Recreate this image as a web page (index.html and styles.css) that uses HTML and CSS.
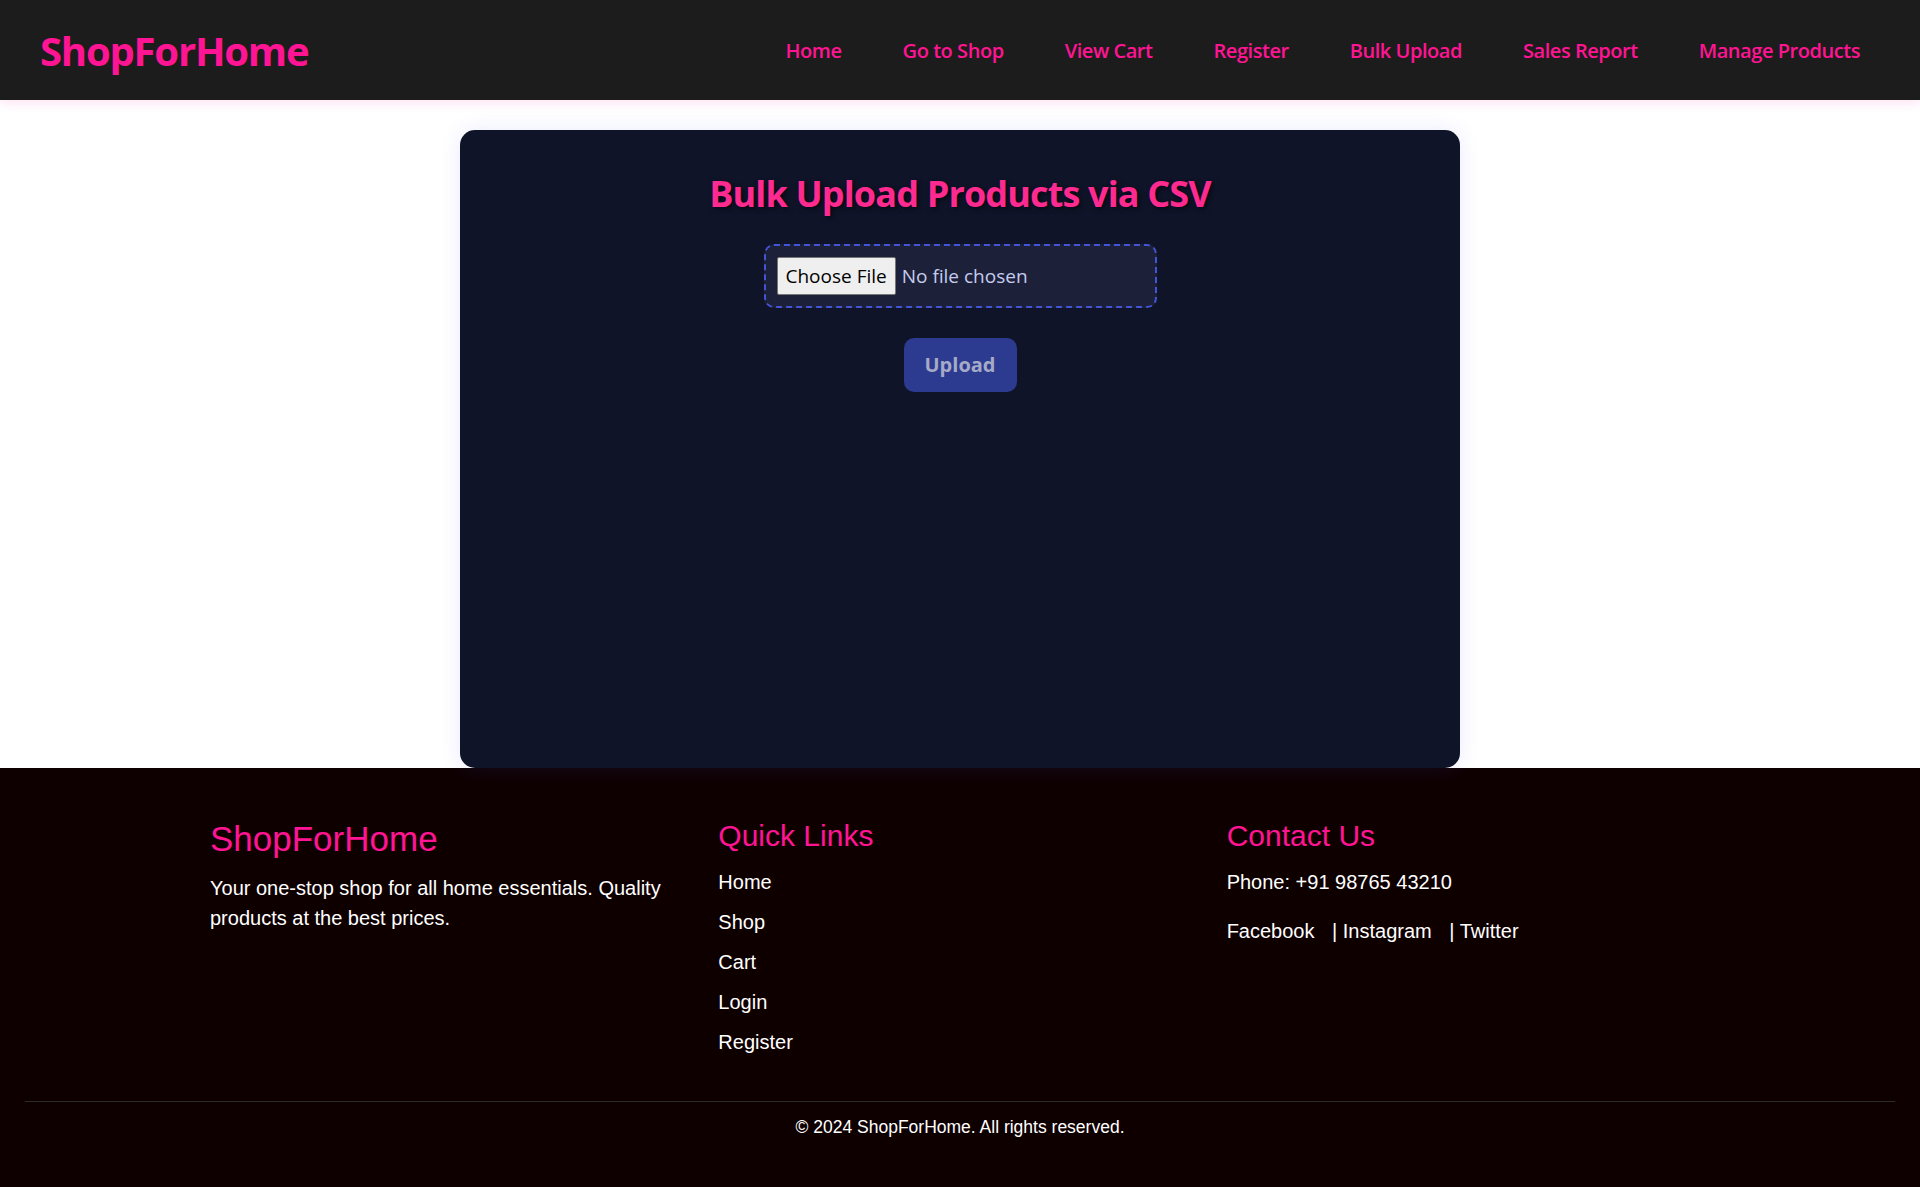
FILE: index.html
```html
<!DOCTYPE html>
<html lang="en">
<head>
<meta charset="utf-8">
<title>ShopForHome - Bulk Upload</title>
<link rel="stylesheet" href="styles.css">
</head>
<body>
<header class="navbar">
  <div class="logo">ShopForHome</div>
  <nav class="nav-links">
    <a class="nav-link" href="#">Home</a>
    <a class="nav-link" href="#">Go to Shop</a>
    <a class="nav-link" href="#">View Cart</a>
    <a class="nav-link" href="#">Register</a>
    <a class="nav-link" href="#">Bulk Upload</a>
    <a class="nav-link" href="#">Sales Report</a>
    <a class="nav-link" href="#">Manage Products</a>
  </nav>
</header>

<main class="page">
  <section class="upload-card">
    <h2 class="upload-title">Bulk Upload Products via CSV</h2>
    <form class="upload-form">
      <input class="file-input" type="file" accept=".csv">
      <button class="upload-btn" type="button" disabled>Upload</button>
    </form>
  </section>
</main>

<footer class="site-footer">
  <div class="footer-grid">
    <div class="footer-col">
      <h2 class="footer-brand">ShopForHome</h2>
      <p class="footer-text">Your one-stop shop for all home essentials. Quality products at the best prices.</p>
    </div>
    <div class="footer-col">
      <h3 class="footer-heading">Quick Links</h3>
      <ul class="footer-links">
        <li><a href="#">Home</a></li>
        <li><a href="#">Shop</a></li>
        <li><a href="#">Cart</a></li>
        <li><a href="#">Login</a></li>
        <li><a href="#">Register</a></li>
      </ul>
    </div>
    <div class="footer-col">
      <h3 class="footer-heading">Contact Us</h3>
      <p class="contact-line">Phone: +91 98765 43210</p>
      <p class="contact-line social"><a href="#">Facebook</a> | <a href="#">Instagram</a> | <a href="#">Twitter</a></p>
    </div>
  </div>
  <div class="footer-bottom">
    <p class="copyright">&copy; 2024 ShopForHome. All rights reserved.</p>
  </div>
</footer>
</body>
</html>
```
FILE: styles.css
```css
html, body {
  margin: 0;
  padding: 0;
}

body {
  font-family: "Open Sans", "Noto Sans", sans-serif;
  background: #ffffff;
}

/* ---------- Header ---------- */
.navbar {
  position: relative;
  z-index: 2;
  box-sizing: border-box;
  height: 100px;
  padding: 0 40px;
  display: flex;
  align-items: center;
  justify-content: space-between;
  background: #1c1c1c;
  box-shadow: 0 3px 10px rgba(255, 20, 147, 0.12);
}

.logo {
  font-size: 40px;
  font-weight: 700;
  color: #ff1493;
  letter-spacing: -1.2px;
}

.nav-links {
  display: flex;
  gap: 21px;
}

.nav-link {
  padding: 0 20px;
  font-size: 20px;
  font-weight: 600;
  color: #ff1493;
  text-decoration: none;
  letter-spacing: -0.45px;
}

/* ---------- Upload card ---------- */
.page {
  display: flex;
  justify-content: center;
  padding-top: 30px;
}

.upload-card {
  box-sizing: border-box;
  width: 1000px;
  height: 638px;
  padding-top: 39px;
  background: #0f1429;
  border-radius: 15px;
  box-shadow: 0 0 20px rgba(80, 90, 255, 0.12);
  text-align: center;
}

.upload-title {
  margin: 0 0 26px;
  font-size: 36px;
  font-weight: 700;
  color: #ff2a8f;
  letter-spacing: -0.85px;
  text-shadow: 2px 2px 5px rgba(0, 0, 0, 0.6);
}

.upload-form {
  display: flex;
  flex-direction: column;
  align-items: center;
  gap: 30px;
}

.file-input {
  box-sizing: border-box;
  width: 393px;
  padding: 11px;
  border: 2px dashed #4354d6;
  border-radius: 10px;
  background: #1c2038;
  color: #c6ccef;
  font-family: "Open Sans", sans-serif;
  font-size: 19px;
}

.file-input::file-selector-button {
  font: inherit;
  color: #000000;
  background: #efefef;
  border: 1px solid #767676;
  border-radius: 2px;
  padding: 5px 8px;
  margin-right: 6px;
}

.upload-btn {
  padding: 13px 21px;
  border: none;
  border-radius: 10px;
  background: #2c3a8f;
  color: #a5aac8;
  font-family: "Open Sans", sans-serif;
  font-size: 20px;
  font-weight: 700;
  line-height: 28px;
}

/* ---------- Footer ---------- */
.site-footer {
  padding: 51px 25px 50px;
  background: #0f0000;
  color: #ffffff;
  font-family: "Liberation Sans", Arial, sans-serif;
}

.footer-grid {
  max-width: 1500px;
  margin: 0 auto;
  display: grid;
  grid-template-columns: repeat(3, 1fr);
  gap: 25px;
}

.footer-brand {
  margin: 0 0 14px;
  font-size: 35px;
  font-weight: 400;
  color: #ff1493;
}

.footer-text {
  margin: 0;
  font-size: 20px;
  line-height: 30px;
}

.footer-heading {
  margin: 0 0 14px;
  font-size: 30px;
  font-weight: 400;
  color: #ff1493;
}

.footer-links {
  list-style: none;
  margin: 0;
  padding: 0;
}

.footer-links li {
  margin-bottom: 10px;
  font-size: 20px;
  line-height: 30px;
}

.footer-links a,
.social a {
  color: #ffffff;
  text-decoration: none;
}

.contact-line {
  margin: 0 0 19px;
  font-size: 20px;
  line-height: 30px;
}

.social a {
  margin-right: 12px;
}

.footer-bottom {
  margin-top: 34px;
  padding-top: 15px;
  border-top: 1px solid #2b2b2b;
  text-align: center;
}

.copyright {
  margin: 0;
  font-size: 17.5px;
}
```
